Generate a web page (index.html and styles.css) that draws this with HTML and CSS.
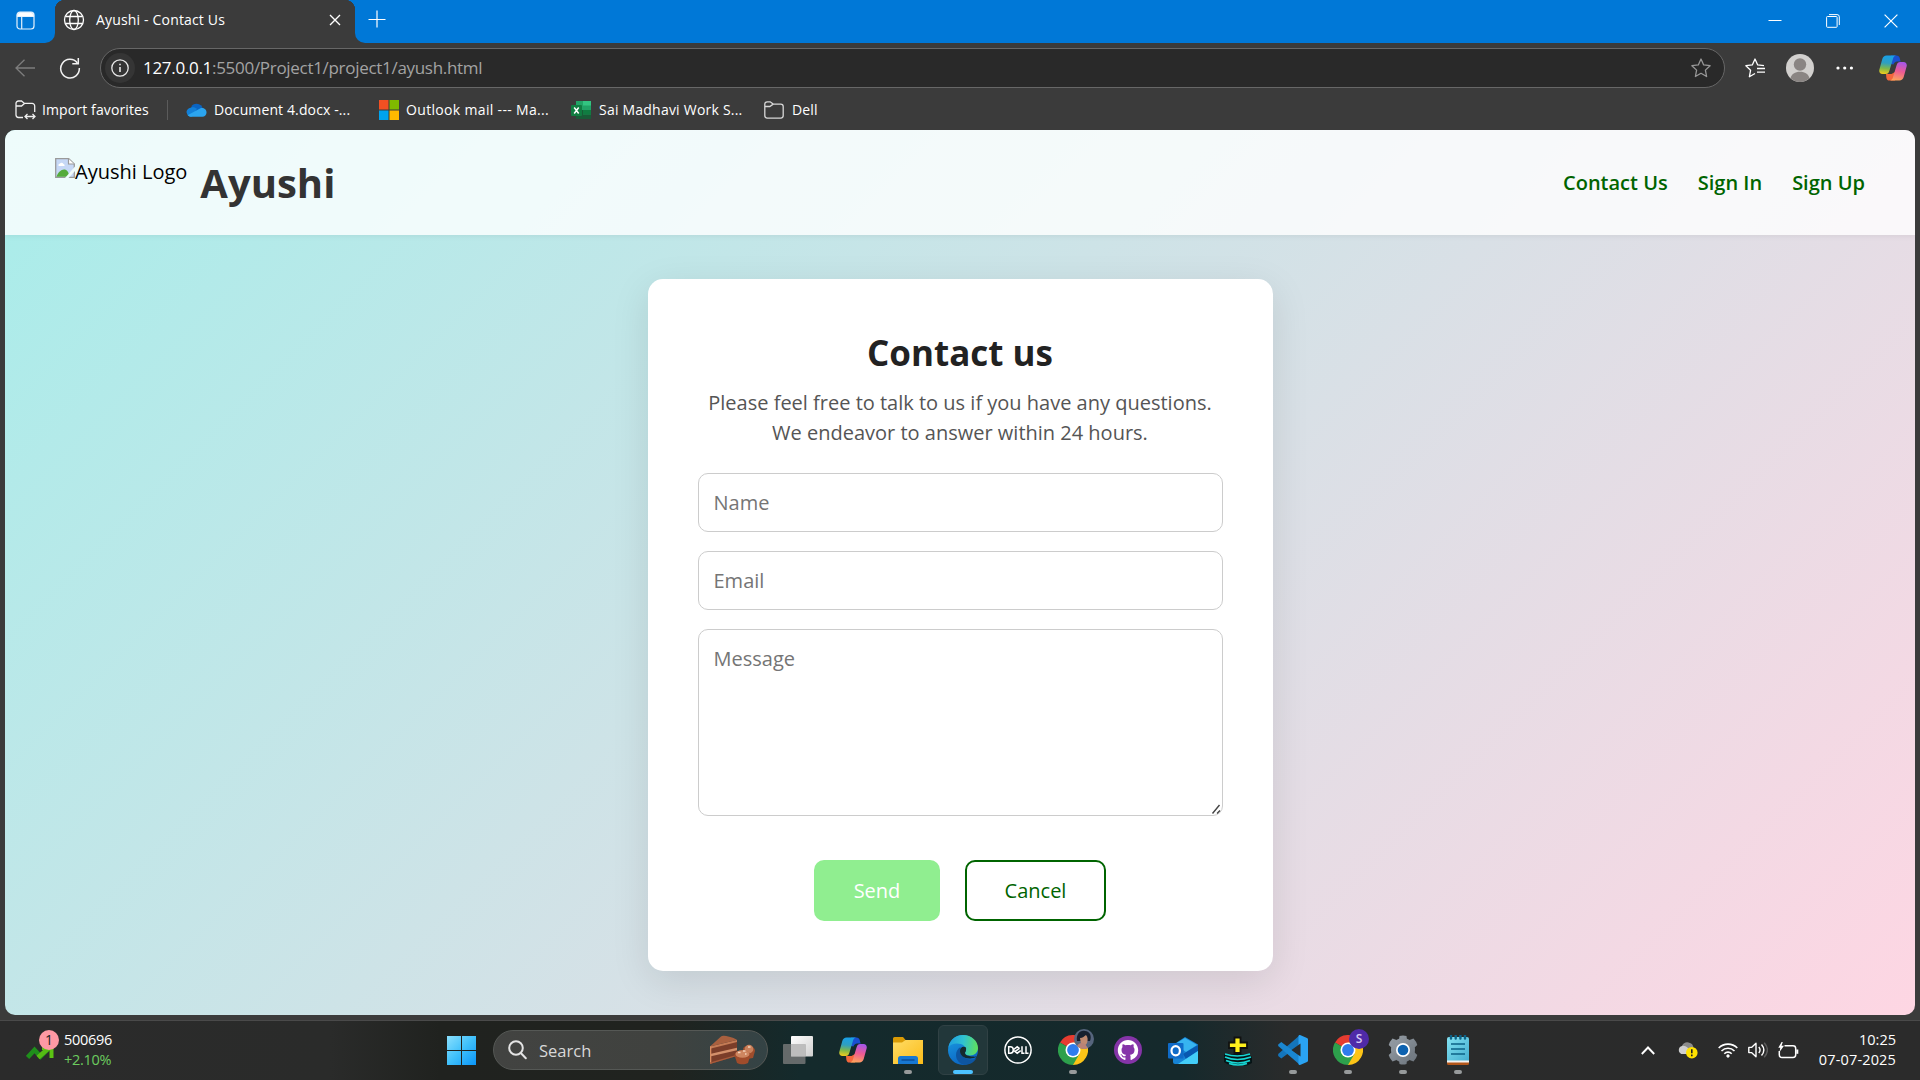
FILE: index.html
```html
<!DOCTYPE html>
<html lang="en">
<head>
<meta charset="utf-8">
<title>Ayushi - Contact Us</title>
<link rel="stylesheet" href="styles.css">
</head>
<body>
<svg class="defs" width="0" height="0" aria-hidden="true">
  <defs>
    <linearGradient id="copA" x1="0.4" y1="0" x2="0.3" y2="1"><stop offset="0" stop-color="#18a0e8"/><stop offset=".4" stop-color="#2f9fc0"/><stop offset=".7" stop-color="#7fb84a"/><stop offset="1" stop-color="#f2cc1c"/></linearGradient>
    <linearGradient id="copB" x1="0.6" y1="0" x2="0.4" y2="1"><stop offset="0" stop-color="#a656e8"/><stop offset=".5" stop-color="#ee5b92"/><stop offset="1" stop-color="#fda35c"/></linearGradient>
    <linearGradient id="edgeA" x1="0" y1="0.3" x2="1" y2="0.4"><stop offset="0" stop-color="#1f9ee0"/><stop offset=".5" stop-color="#30c2d0"/><stop offset="1" stop-color="#5fe05c"/></linearGradient>
    <linearGradient id="edgeB" x1="0" y1="0" x2="0.4" y2="1"><stop offset="0" stop-color="#1b9de2"/><stop offset="1" stop-color="#0b66c4"/></linearGradient>
    <linearGradient id="win" x1="0" y1="0" x2="1" y2="1"><stop offset="0" stop-color="#8be0fd"/><stop offset=".5" stop-color="#3fc0fb"/><stop offset="1" stop-color="#0a95f8"/></linearGradient>
    <linearGradient id="fold" x1="0" y1="0" x2="1" y2="1"><stop offset="0" stop-color="#ffdc66"/><stop offset="1" stop-color="#fbbc18"/></linearGradient>
    <linearGradient id="gear" x1="0" y1="0" x2="1" y2="1"><stop offset="0" stop-color="#98a0a8"/><stop offset="1" stop-color="#6a727a"/></linearGradient>
    <linearGradient id="note" x1="0" y1="0" x2="1" y2="1"><stop offset="0" stop-color="#83e2f2"/><stop offset="1" stop-color="#45aed0"/></linearGradient>
    <linearGradient id="tv" x1="0" y1="0" x2="1" y2="1"><stop offset="0" stop-color="#ffffff"/><stop offset="1" stop-color="#cfcfcf"/></linearGradient>
    <symbol id="copilot" viewBox="0 0 28 26">
      <path fill="#1a4fd0" d="M12 .5h5.500c1.700 0 2.800 1 3.200 2.600l.9 3.400h-3.400c-2 0-3.200 1.400-3.700 3L12 9z"/>
      <path fill="#f4673c" d="M7 19h5.500l3.500-2v8.500h-5.500c-1.700 0-2.700-1-3.100-2.600z"/>
      <path fill="url(#copA)" d="M7.600.5H17c-1.700.3-2.500 1.600-3 3.200l-3.600 12.100C9.700 18 8.700 19 6.700 19H3.500C.8 19-.2 17 .4 14.500L3.300 4C4 1.800 5.400.5 7.600.5z"/>
      <path fill="url(#copB)" d="M20.400 25.500H11c1.700-.3 2.500-1.600 3-3.200l3.600-12.100C18.300 8 19.300 7 21.300 7h3.200c2.700 0 3.700 2 3.100 4.500L24.700 22c-.7 2.200-2.100 3.500-4.300 3.500z"/>
    </symbol>
    <symbol id="chrome" viewBox="0 0 30 30">
      <path fill="#e63c30" d="M15 15 2 7.500a15 15 0 0 1 26 0z"/>
      <path fill="#fcc417" d="M15 15V7.500h13A15 15 0 0 1 15 30z"/>
      <path fill="#2da04c" d="M15 15 2 7.500A15 15 0 0 0 15 30l6.500-11.200z"/>
      <circle cx="15" cy="15" r="7.500" fill="#fff"/><circle cx="15" cy="15" r="5.900" fill="#2f7cee"/>
    </symbol>
  </defs>
</svg>

<div class="browser">
  <div class="tabstrip">
    <div class="workspaces">
      <svg width="19" height="19" viewBox="0 0 19 19" fill="none" stroke="#e6f2fc" stroke-width="1.200"><rect x="1" y="1" width="17" height="17" rx="3"/><path d="M1.500 4a3 3 0 0 1 3-2.500h10a3 3 0 0 1 3 2.500v1.500h-16z" fill="#fff"/><path d="M5.700 6v12"/></svg>
    </div>
    <div class="tab">
      <svg width="22" height="22" viewBox="0 0 22 22" fill="none" stroke="#fff" stroke-width="1.300"><circle cx="11" cy="11" r="9.500"/><ellipse cx="11" cy="11" rx="4.300" ry="9.500"/><path d="M2.500 7.500h17M2.500 14.500h17"/></svg>
      <span class="tab-title">Ayushi - Contact Us</span>
      <svg class="tab-close" width="12" height="12" viewBox="0 0 12 12" stroke="#fff" stroke-width="1.400"><path d="M1 1l10 10M11 1 1 11"/></svg>
    </div>
    <svg class="new-tab" width="18" height="18" viewBox="0 0 18 18" stroke="#fff" stroke-width="1.200"><path d="M9 .5v17M.5 9.500h17"/></svg>
    <div class="window-controls">
      <svg width="14" height="14" viewBox="0 0 14 14" stroke="#fff"><path d="M.5 6.500h13"/></svg>
      <svg width="14" height="14" viewBox="0 0 14 14" stroke="#fff" fill="none"><rect x=".6" y="2.500" width="10.500" height="10.800" rx=".8"/><path d="M3 .6h8a2.200 2.200 0 0 1 2.300 2.200V11"/></svg>
      <svg width="14" height="14" viewBox="0 0 14 14" stroke="#fff" stroke-width="1.200"><path d="M.6.600l12.800 12.800M13.400.600.600 13.400"/></svg>
    </div>
  </div>

  <div class="toolbar">
    <svg width="20" height="18" viewBox="0 0 20 18" fill="none" stroke="#7d7d7d" stroke-width="1.300"><path d="M20 9H1M9.500.700 1 9l8.500 8.300"/></svg>
    <svg class="reload" width="22" height="22" viewBox="0 0 22 22" fill="none" stroke="#f2f2f2" stroke-width="1.500"><path d="M18.400 6A9.300 9.300 0 1 0 20.300 11"/><path d="M19.300 1v5.800h-6"/></svg>
    <div class="address">
      <span class="info"><svg width="18" height="18" viewBox="0 0 18 18" fill="none" stroke="#e8e8e8" stroke-width="1.300"><circle cx="9" cy="9" r="8.200"/><path d="M9 8v5M9 4.700v1.600" stroke-width="1.600"/></svg></span>
      <span class="url"><b>127.0.0.1</b>:5500/Project1/project1/ayush.html</span>
      <svg class="star" width="20" height="20" viewBox="0 0 20 20" fill="none" stroke="#989898" stroke-width="1.300" stroke-linejoin="round"><path d="M10 1l2.700 5.900 6.400.8-4.700 4.400 1.200 6.400L10 15.300l-5.600 3.200 1.200-6.400L.9 7.700l6.400-.8z"/></svg>
    </div>
    <svg class="favs" width="20" height="20" viewBox="0 0 20 20" fill="none" stroke="#fff" stroke-width="1.300" stroke-linejoin="round"><path d="M10 15.500 4.400 18.700l1.200-6.500L.9 7.700l6.400-.8L10 1l2.700 5.900 6.300.8M12 10.500h8M12 14.200h8"/></svg>
    <svg class="avatar" width="28" height="28" viewBox="0 0 28 28"><circle cx="14" cy="14" r="14" fill="#d2d0ce"/><circle cx="14" cy="10.500" r="6.200" fill="#8a8583"/><path d="M4.500 24.300C5.500 20 9 17.800 14 17.800s8.500 2.200 9.500 6.500A14 14 0 0 1 14 28a14 14 0 0 1-9.500-3.700z" fill="#8a8583"/></svg>
    <svg class="dots" width="18" height="4" viewBox="0 0 18 4" fill="#fff"><circle cx="2" cy="2" r="1.600"/><circle cx="8.700" cy="2" r="1.600"/><circle cx="15.400" cy="2" r="1.600"/></svg>
    <svg class="copilot" width="28" height="26"><use href="#copilot"/></svg>
  </div>

  <div class="favorites">
    <span class="fav fav-import"><svg width="21" height="20" viewBox="0 0 21 20" fill="none" stroke="#f0f0f0" stroke-width="1.300"><path d="M8 17.500H3.500A2.600 2.600 0 0 1 1 15V3.500A2.500 2.500 0 0 1 3.500 1h3l3 2.400h7.500A2.600 2.600 0 0 1 19.700 6v6M1 6h5.500l3-2.600M10 16.500h10M12.500 14 10 16.500l2.500 2.500M17.500 14l2.500 2.500-2.500 2.500"/></svg><span>Import favorites</span></span>
    <i class="divider"></i>
    <span class="fav fav-doc"><svg width="21" height="14" viewBox="0 0 21 14"><path d="M6 2.500A6.500 6.500 0 0 1 16.600 5L12 11l-9-1z" fill="#0a64c2"/><path d="M5.500 4.500c2-.6 4 .2 5.500 1.300L6 13.600a5 5 0 0 1-5.400-4c-.3-2.400 2-5 4.900-5.100z" fill="#1280d8"/><path d="M14 5.500c4-1.500 7 1.500 6.500 4.600-.3 2.200-2 3.700-4 3.700H5c-1.500 0-2.600-.6-3.400-1.500z" fill="#2ba4ee"/></svg><span>Document 4.docx -...</span></span>
    <span class="fav fav-mail"><svg width="20" height="20" viewBox="0 0 20 20"><path fill="#f25022" d="M0 0h9.500v9.500H0z"/><path fill="#7fba00" d="M10.500 0H20v9.500h-9.500z"/><path fill="#00a4ef" d="M0 10.500h9.500V20H0z"/><path fill="#ffb900" d="M10.500 10.500H20V20h-9.500z"/></svg><span>Outlook mail --- Ma...</span></span>
    <span class="fav fav-sheet"><svg width="20" height="18" viewBox="0 0 20 18"><path fill="#21a366" d="M5 0h15v18H5z"/><path fill="#33c481" d="M12 0h8v4.500h-8z"/><path fill="#107c41" d="M12 9h8v4.500h-8z"/><path fill="#185c37" d="M5 9h7v4.500h8V18H5z"/><rect y="4" width="11" height="11" rx="1" fill="#107c41"/><path d="M3.200 6.500l4.500 6M7.700 6.500l-4.500 6" stroke="#fff" stroke-width="1.500"/></svg><span>Sai Madhavi Work S...</span></span>
    <span class="fav fav-dell"><svg width="20" height="18" viewBox="0 0 20 18" fill="none" stroke="#d8d8d8" stroke-width="1.300"><path d="M.8 3.300A2.500 2.500 0 0 1 3.300.8h2.900l3 2.300h7.500a2.500 2.500 0 0 1 2.500 2.500v9a2.500 2.500 0 0 1-2.500 2.500H3.300a2.500 2.500 0 0 1-2.500-2.500zM.8 5.500h5l3.400-2.400"/></svg><span>Dell</span></span>
  </div>

  <div class="page">
    <header class="site-header">
      <div class="brand">
        <span class="logo"><svg width="20" height="20" viewBox="0 0 20 20"><path d="M.7.700h13L19.300 6v13.300H.7z" fill="#c6d8f6" stroke="#9a9a9a" stroke-width="1.300"/><path d="M13.500.8V6h5.600" fill="#fff" stroke="#9a9a9a" stroke-width="1.200"/><path d="M3.500 8a2 2 0 0 1 1.500-2.500 2 2 0 0 1 3.500.5A1.500 1.500 0 0 1 9.500 8z" fill="#fff"/><path d="M1.400 18.700C3 14.500 6 11.500 9 11.500s4.500 2.500 5.500 7.200z" fill="#55ab3b"/><path d="M20 8.500v4.500L13.500 20H10z" fill="#f0fbfb"/></svg><span>Ayushi Logo</span></span>
        <h1>Ayushi</h1>
      </div>
      <nav><a>Contact Us</a><a>Sign In</a><a>Sign Up</a></nav>
    </header>
    <main>
      <form class="card">
        <h2>Contact us</h2>
        <p>Please feel free to talk to us if you have any questions. We endeavor to answer within 24 hours.</p>
        <input type="text" placeholder="Name">
        <input type="text" placeholder="Email">
        <div class="message">
          <textarea placeholder="Message"></textarea>
          <svg class="grip" width="10" height="10" viewBox="0 0 10 10" stroke="#444" stroke-width="1.400"><path d="M1.500 9.500l7-8.500M6 9.500l3-3"/></svg>
        </div>
        <div class="actions"><button type="button" class="send">Send</button><button type="button" class="cancel">Cancel</button></div>
      </form>
    </main>
  </div>
</div>

<footer class="taskbar">
  <div class="widget">
    <div class="widget-icon">
      <svg width="30" height="31" viewBox="0 0 30 31"><path d="M1.500 26.500 8.500 19l6 6.500L24 16" fill="none" stroke="#1f8f1b" stroke-width="4.600"/><path d="M12 26.500 24 16" stroke="#55bb14" stroke-width="4.600"/><path d="M16 15h11.500v12h-4V19H16z" fill="#5cc413"/></svg>
      <span class="count">1</span>
    </div>
    <div class="widget-text"><span>500696</span><span class="gain">+2.10%</span></div>
  </div>
  <svg class="start" width="29" height="29" viewBox="0 0 29 29"><path fill="url(#win)" d="M0 0h14v14H0zM15 0h14v14H15zM0 15h14v14H0zM15 15h14v14H15z"/></svg>
  <div class="search">
    <svg width="19" height="20" viewBox="0 0 19 20" fill="none" stroke="#e4e4e4" stroke-width="2"><circle cx="8" cy="8" r="6.800"/><path d="M12.800 13l5 5.200" stroke-linecap="round"/></svg>
    <span>Search</span>
    <svg class="cake" width="46" height="30" viewBox="0 0 46 30"><path d="M1 11.500 12 1.500q1-1 3-.8C21 1.500 26 3 28 5z" fill="#a9603f"/><path d="M1 11.500 28 5v16L1 29z" fill="#7b3d29"/><path d="M1 11.500 28 5v2L1 13.800z" fill="#c47b55"/><path d="M1 19 28 12.800v2.400L1 21.600z" fill="#d3906b"/><path d="M1 11.500l1.300-.3v17.500L1 29z" fill="#d98d62"/><path d="M1 27.500 27 20v1.300L1 29z" fill="#a65b3c"/><path d="M34 14c1-5 12-4 12 2l-2 7-6 1z" fill="#9e4d2c"/><circle cx="40" cy="14" r="4.300" fill="#c8805b"/><path d="M25.500 20c1-6.500 15-6.500 16 0L39 28c-3 1.700-8 1.700-11 0z" fill="#a04c2b"/><ellipse cx="33.500" cy="19" rx="7" ry="3.800" fill="#ce8660"/><path d="M29 17.500h2.500M34 16h2.500M36 19h1.500M39 12h2.500" stroke="#f4d2b8" stroke-width="1.300"/></svg>
  </div>
  <div class="apps">
    <span class="app"><svg width="30" height="28" viewBox="0 0 30 28"><rect x="8" width="22" height="20.500" rx="1" fill="url(#tv)"/><rect x="0" y="8" width="22.500" height="20" rx="1" fill="#808080" opacity=".75"/><path d="M8 8h14.500v12.500H8z" fill="#bdbdbd"/></svg></span>
    <span class="app"><svg width="28" height="26"><use href="#copilot"/></svg></span>
    <span class="app run"><svg width="30" height="27" viewBox="0 0 30 27"><path d="M0 1.500A1.500 1.500 0 0 1 1.500 0H10l3 3.500-4 4H0z" fill="#d99a05"/><path d="M0 5.500h9L12.500 3H30v24H0z" fill="url(#fold)"/><path d="M5 27v-5.500A2.500 2.500 0 0 1 7.500 19h15a2.500 2.500 0 0 1 2.500 2.500V27z" fill="#1778d2"/><path d="M8.500 23h13" stroke="#0a4790" stroke-width="1.300"/></svg></span>
    <span class="app active"><svg width="30" height="30" viewBox="0 0 30 30"><circle cx="15" cy="15" r="15" fill="url(#edgeB)"/><path d="M.5 12.500C1.500 5 7.500 0 15 0c8.500 0 15 6 15 13 0 4.500-3.500 7.500-8 7.500-3.500 0-5-1.500-5-2.500s1-1.300 1-3.500c0-3-3.500-6-9-6-4 0-7 1.500-8.500 4z" fill="url(#edgeA)"/><path d="M12.500 12C9.500 14 8 16.500 8 20c0 5 3.500 9 9 10 5-.3 9.300-3 11.500-7-5.500 3.500-17 1.500-16-11z" fill="#0e55a0"/><path d="M18 12.500c-3-2-6 0-6 3.500 0 5 5.500 8.300 11.500 7.300 3-.5 4.500-1.300 5.300-1.800-2 .5-11.800 0-11.800-3.500 0-1 1.500-1.500 1-5.500z" fill="#15292d"/></svg></span>
    <span class="app"><svg width="28" height="28" viewBox="0 0 28 28" fill="none" stroke="#fff"><circle cx="14" cy="14" r="13.100" stroke-width="1.500"/><path d="M4.700 10.800v6.400h1.600c4 0 4-6.400 0-6.400zM9 14l4.200-3.200 2.400 1.800M9 14l4.200 3.200 3.500-2.600M11.200 15.300l4.200-3M18 10.300v6.900h2.500M22 10.300v6.900h2.500" stroke-width="1.500"/></svg></span>
    <span class="app run"><svg width="30" height="30"><use href="#chrome"/></svg><svg class="badge" width="20" height="20" viewBox="0 0 20 20"><circle cx="10" cy="10" r="10" fill="#56657d"/><path d="M3 12C2 5 6 1 11 2c5 .5 7 5 5 10z" fill="#17202e"/><path d="M6 9c3 0 4-2 6-3 2 2 2 5 1 8s-5 3-6 1z" fill="#c08a70"/><path d="M3 17c2-3 4-4 8-2l3 4.200c-4 1.500-8 .8-11-2.200z" fill="#b98376"/></svg></span>
    <span class="app"><svg width="28" height="28" viewBox="0 0 28 28"><circle cx="14" cy="14" r="14" fill="#8534a8"/><path transform="translate(3.800 4) scale(1.275)" fill="#fff" d="M8 0C3.580 0 0 3.580 0 8c0 3.540 2.290 6.530 5.470 7.590.4.070.55-.17.55-.38 0-.19-.01-.82-.01-1.490-2.010.37-2.530-.49-2.690-.94-.09-.23-.48-.94-.82-1.130-.28-.15-.68-.52-.01-.53.63-.01 1.080.58 1.230.82.72 1.210 1.870.87 2.330.66.070-.52.28-.87.51-1.070-1.780-.2-3.640-.89-3.640-3.950 0-.87.310-1.590.82-2.150-.08-.2-.36-1.020.08-2.120 0 0 .67-.21 2.200.82.64-.18 1.320-.27 2-.27s1.360.09 2 .27c1.530-1.040 2.200-.82 2.200-.82.44 1.100.16 1.920.08 2.120.51.56.82 1.270.82 2.150 0 3.070-1.870 3.750-3.650 3.950.29.25.54.73.54 1.480 0 1.070-.01 1.930-.01 2.200 0 .21.15.46.55.38A8.010 8.010 0 0 0 16 8c0-4.420-3.580-8-8-8z"/></svg></span>
    <span class="app"><svg width="30" height="27" viewBox="0 0 30 27"><path d="M5 8 17 0l13 7.500V25a2 2 0 0 1-2 2H7a2 2 0 0 1-2-2z" fill="#1683d5"/><path d="M7 7 17 1l12 7-11 7z" fill="#37b4f0"/><path d="M15 17 30 8v6L18 22z" fill="#0858b0"/><path d="M10 27 30 14v11a2 2 0 0 1-2 2z" fill="#43cdf8"/><rect y="6" width="15.500" height="15.500" rx="1" fill="#0f6bc8"/><ellipse cx="7.700" cy="13.700" rx="4.200" ry="4.600" fill="none" stroke="#fff" stroke-width="2.200"/></svg></span>
    <span class="app"><svg width="30" height="31" viewBox="0 0 30 31"><path d="M1 19h24l4 3v6l-5 2.500H7L1 27z" fill="#061315"/><path d="M2 19q12 4 25 0M2 22q12 5 26 0M3 25.500q12 5 24 0M6 28.500q9 3 18 0" stroke="#17d6d4" stroke-width="1.600" fill="none"/><path d="M11.500 2.500h6V7.500H24v5.500h-6.500V18h-6v-5H6V7.500h5.500z" fill="#fff01c" stroke="#111" stroke-width="1.800"/></svg></span>
    <span class="app run"><svg width="30" height="30" viewBox="0 0 30 30"><path d="M22 0v9.500L3.300 23.500.2 21V19z" fill="#1475bb"/><path d="M.2 11v-1.500L3.300 7 22 21v9L.2 11z" fill="#1a86d0"/><path d="M22 0l7 3a2 2 0 0 1 1 2v20a2 2 0 0 1-1 2l-7 3c-1 .2-1.500-.5-1.500-1V1c0-.5.500-1.200 1.500-1z" fill="#2aa3f3"/><path d="M22.500 8.500v13L13.500 15z" fill="#292b2b"/></svg></span>
    <span class="app run"><svg width="30" height="30"><use href="#chrome"/></svg><span class="badge initial">S</span></span>
    <span class="app run"><svg width="30" height="30" viewBox="0 0 30 30"><g fill="url(#gear)"><circle cx="15" cy="15" r="12"/><path d="M11 5 11.500.900Q15-.100 18.500.900L19 5zM19 25l-.5 4.100q-3.500 1-7 0L11 25zM21.500 5l4-1.500q3 3.200 3.800 6.500L26 13zM8.500 25l-4 1.500q-3-3.200-3.800-6.500L4 17zM4 13 .7 10q.8-3.300 3.800-6.500L8.500 5zM26 17l3.300 3q-.8 3.300-3.800 6.500L21.500 25z"/></g><circle cx="15" cy="15" r="7" fill="#fff"/><circle cx="15" cy="15" r="5.300" fill="#0d62b0"/></svg></span>
    <span class="app run"><svg width="22" height="30" viewBox="0 0 22 30"><path d="M0 27h22v1.500A1.500 1.500 0 0 1 20.500 30h-19A1.500 1.500 0 0 1 0 28.500z" fill="#b2561a"/><path d="M0 24h22v3.500H0z" fill="#f2f2f2"/><path d="M0 4a2 2 0 0 1 2-2h18a2 2 0 0 1 2 2v21.500H0z" fill="url(#note)"/><path d="M4 9h14M4 14h14M4 19h14" stroke="#0c6287" stroke-width="1.700"/><path d="M4 .5v3M8.700.5v3M13.400.5v3M18 .5v3" stroke="#0c6287" stroke-width="2.400" stroke-linecap="round"/></svg></span>
  </div>
  <div class="tray">
    <svg width="14" height="9" viewBox="0 0 14 9" fill="none" stroke="#fff" stroke-width="1.900"><path d="M.8 8 7 1.500 13.200 8"/></svg>
    <svg class="cloud" width="21" height="18" viewBox="0 0 21 18"><path d="M5 5a6 6 0 0 1 11.500 2L13 13H4z" fill="#8b8b8b"/><path d="M5 5c2-.5 4 .5 6 2v6H4.500A4.200 4.200 0 0 1 5 5z" fill="#cfcfcf"/><circle cx="14.800" cy="11.700" r="5.800" fill="#ffe100"/><path d="M14.800 8.300v4M14.800 13.500v1.700" stroke="#222" stroke-width="1.600"/></svg>
    <svg class="wifi" width="20" height="16" viewBox="0 0 20 16" fill="none" stroke="#fff" stroke-width="1.600"><path d="M.7 6a13 13 0 0 1 18.600 0M3.500 9a9.200 9.200 0 0 1 13 0M6.300 11.700a5.200 5.200 0 0 1 7.400 0"/><circle cx="10" cy="14" r="1.200" fill="#fff" stroke-width="1"/></svg>
    <svg class="sound" width="20" height="16" viewBox="0 0 20 16" fill="none" stroke="#fff" stroke-width="1.400"><path d="M.8 5.400h2.700L8 1.300v13.400l-4.500-4.100H.8z" stroke-linejoin="round"/><path d="M10.800 5c1.500 1.800 1.500 4.200 0 6M13.500 2.500c3 3.500 3 7.500 0 11"/><path d="M16.200.8c4 4.500 4 9.900 0 14.400" stroke="#5d5d5d"/></svg>
    <svg class="battery" width="21" height="17" viewBox="0 0 21 17" fill="none" stroke="#fff" stroke-width="1.500"><path d="M6.500 3.800H15A2.700 2.700 0 0 1 17.700 6.500v6.300A2.700 2.700 0 0 1 15 15.500H4a2.700 2.700 0 0 1-2.700-2.700V9"/><path d="M19.300 7.500v4.300" stroke-width="2"/><path d="M3.600 0 .3 5.700h2L1.500 10 6 3.700H3.500L4.800 0z" fill="#fff" stroke="none"/></svg>
    <div class="clock"><span>10:25</span><span class="date">07-07-2025</span></div>
  </div>
</footer>
</body>
</html>
```
FILE: styles.css
```css
* { box-sizing: border-box; }
body {
  margin: 0;
  width: 1920px;
  height: 1080px;
  overflow: hidden;
  display: flex;
  flex-direction: column;
  background: #3b3b3b;
  color: #fff;
  font-family: "Open Sans", "Noto Sans", sans-serif;
}
svg { display: block; flex: none; }
.defs { position: absolute; }

/* Browser frame */
.browser { height: 1020px; display: flex; flex-direction: column; }
.tabstrip {
  height: 43px;
  flex: none;
  display: flex;
  background: linear-gradient(90deg, #3b3b3b 0 365px, #0078d7 365px);
}
.workspaces { width: 55px; padding: 11px 0 0 16px; border-radius: 0 0 10px 0; background: #0078d7; }
.tab {
  width: 300px;
  height: 43px;
  display: flex;
  align-items: center;
  padding: 0 14px 4px 8px;
  background: #3b3b3b;
  border-radius: 10px 10px 0 0;
  box-shadow: 0 -10px 0 #0078d7;
}
.tabstrip { background: #3b3b3b; }
.tab { background: radial-gradient(circle at 10px 10px, #3b3b3b 10px, #0078d7 10.500px) 0 0 / 10px 10px no-repeat, radial-gradient(circle at 0 10px, #3b3b3b 10px, #0078d7 10.500px) 100% 0 / 10px 10px no-repeat, #3b3b3b; border-radius: 0; box-shadow: none; }
.tab-rest { flex: 1; }
.tab-title { margin-left: 11px; font-size: 14px; letter-spacing: .17px; white-space: nowrap; }
.tab-close { margin-left: auto; }
.new-tab { padding: 0; margin: 0; width: 44px; height: 43px; border-radius: 0 0 0 10px; background: #0078d7; padding: 10px 13px 15px 13px; }
.window-controls { flex: 1; display: flex; justify-content: flex-end; gap: 44px; padding: 14px 22px 0 0; background: #0078d7; }

.toolbar { height: 50px; flex: none; display: flex; align-items: center; padding: 0 13px 0 15px; }
.reload { margin-left: 24px; }
.address {
  width: 1625px;
  height: 40px;
  margin-left: 19px;
  display: flex;
  align-items: center;
  padding: 0 13px 0 4px;
  border: 1px solid #676767;
  border-radius: 20px;
  background: #292929;
}
.info { width: 30px; height: 30px; border-radius: 50%; background: #353535; display: grid; place-items: center; }
.url { margin-left: 8px; padding-bottom: 2px; font-size: 17px; letter-spacing: -.3px; color: #a3a3a3; white-space: nowrap; }
.url b { font-weight: 400; color: #fff; }
.star { margin-left: auto; }
.favs { margin-left: 20px; }
.avatar { margin-left: 21px; }
.dots { margin-left: 22px; }
.copilot { margin-left: 25px; }

.favorites { height: 37px; flex: none; display: flex; align-items: center; padding: 0 0 3px 15px; font-size: 14px; letter-spacing: .12px; }
.fav { display: flex; align-items: center; gap: 8px; white-space: nowrap; }
.fav span { padding-bottom: 2px; }
.fav-import { width: 152px; gap: 6px; }
.divider { width: 1px; height: 20px; background: #5b5b5b; margin-right: 18px; }
.fav-doc { width: 193px; gap: 7px; }
.fav-mail { width: 192px; gap: 7px; letter-spacing: .33px; }
.fav-sheet { width: 193px; letter-spacing: .22px; }

/* Web page */
.page {
  height: 885px;
  flex: none;
  margin: 0 5px;
  border-radius: 10px;
  overflow: hidden;
  background: linear-gradient(135deg, #a8edea, #fed6e3);
}
.site-header {
  height: 105px;
  display: flex;
  align-items: center;
  justify-content: space-between;
  padding: 0 50px;
  background: rgba(255, 255, 255, .8);
  box-shadow: 0 2px 5px rgba(0, 0, 0, .05);
}
.brand { display: flex; gap: 13px; align-items: center; }
.logo { display: flex; height: 50px; color: #000; font-size: 20px; line-height: 28px; white-space: nowrap; }
h1 { margin: 0; font-size: 40px; font-weight: 700; line-height: 50px; color: #333; }
nav { display: flex; gap: 30px; color: #006400; font-size: 20px; font-weight: 600; }
main { display: flex; justify-content: center; padding-top: 44px; }
.card {
  width: 625px;
  height: 692px;
  padding: 50px;
  border-radius: 15px;
  background: #fff;
  box-shadow: 0 10px 38px rgba(0, 0, 0, .1);
}
h2 { margin: 0 0 11px; text-align: center; font-size: 35px; line-height: 48px; color: #222; }
p { margin: 0 0 25px; text-align: center; font-size: 20px; line-height: 30px; height: 60px; color: #555; }
input, textarea {
  display: block;
  width: 100%;
  padding: 14px 15px;
  border: 1px solid #ccc;
  border-radius: 10px;
  background: #fff;
  font: 20px/30px "Open Sans", sans-serif;
}
input { height: 59px; margin-bottom: 19px; }
input::placeholder, textarea::placeholder { color: #757575; opacity: 1; }
.message { position: relative; }
textarea { height: 187px; resize: none; }
.grip { position: absolute; right: 2px; bottom: 2px; }
.actions { display: flex; justify-content: center; gap: 25px; margin-top: 44px; }
button { height: 61px; padding: 0; border-radius: 10px; font: 20px "Open Sans", sans-serif; }
.send { width: 126px; border: 0; background: #90ee90; color: #fff; }
.cancel { width: 141px; border: 2px solid #006400; background: #fff; color: #006400; }

/* Taskbar */
.taskbar {
  height: 60px;
  display: flex;
  align-items: center;
  padding-bottom: 1px;
  border-top: 1px solid #4a4a4a;
  background: linear-gradient(90deg, #2b2b2b 0, #2a2b2a 330px, #20221f 440px, #20231f 670px, #142a2c 800px, #15292c 1180px, #2a2b2b 1290px, #2b2b2b);
}
.widget { width: 447px; flex: none; display: flex; align-items: center; }
.widget-icon { position: relative; margin-left: 26px; padding-bottom: 7px; }
.count { position: absolute; left: 13px; top: -1px; width: 20px; height: 20px; border-radius: 50%; background: #ff99a4; color: #222; font-size: 14px; line-height: 20px; text-align: center; }
.widget-text { margin-left: 8px; padding-bottom: 1px; display: flex; flex-direction: column; font-size: 14.500px; line-height: 20px; letter-spacing: -.3px; }
.gain { color: #6ccb5f; }
.search {
  width: 275px;
  height: 40px;
  margin-left: 17px;
  display: flex;
  align-items: center;
  padding: 0 12px 0 14px;
  border: 1px solid #555855;
  border-radius: 20px;
  background: linear-gradient(90deg, #424341, #40423f 60%, #344345);
  color: #d8d8d8;
  font-size: 16.500px;
}
.search span { margin-left: 12px; }
.cake { margin-left: auto; }
.apps { display: flex; margin-left: 2px; }
.app { position: relative; width: 55px; height: 50px; display: grid; place-items: center; }
.run::after { content: ""; position: absolute; left: 24px; bottom: 1px; width: 8px; height: 4px; border-radius: 2px; background: #979a9b; }
.active::before { content: ""; position: absolute; inset: 0 2px 0 3px; border: 1px solid #304144; border-radius: 6px; background: #22373a; }
.active svg { position: relative; }
.active::after { content: ""; position: absolute; left: 18px; bottom: 1px; width: 20px; height: 4px; border-radius: 2px; background: #4cc2ff; }
.badge { position: absolute; left: 29px; top: 4px; width: 20px; height: 20px; }
.initial { border-radius: 50%; background: #4f2aa8; color: #d8c8f4; font-size: 12px; font-weight: 600; line-height: 20px; text-align: center; }
.tray { margin-left: auto; display: flex; align-items: center; padding-right: 24px; }
.cloud { margin-left: 22px; }
.wifi { margin-left: 20px; }
.sound { margin-left: 10px; }
.battery { margin-left: 10px; }
.clock { width: 97px; padding-bottom: 1px; display: flex; flex-direction: column; align-items: flex-end; font-size: 14.500px; line-height: 20px; }
.date { letter-spacing: .15px; }
```
